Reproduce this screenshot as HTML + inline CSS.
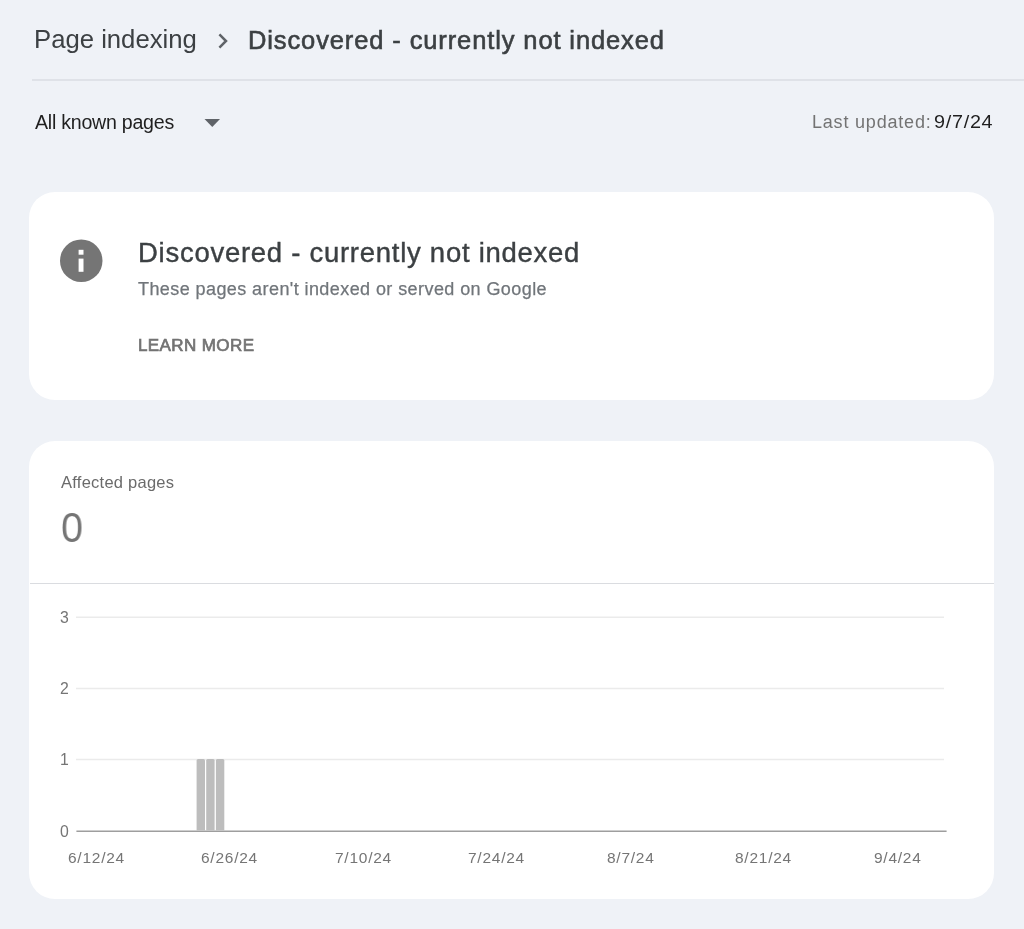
<!DOCTYPE html>
<html>
<head>
<meta charset="utf-8">
<style>
  html, body { margin:0; padding:0; }
  body { width:1024px; height:929px; overflow:hidden; background:#eff2f7; position:relative;
         font-family:"Liberation Sans", sans-serif; }
  .t { position:absolute; white-space:nowrap; line-height:1; will-change:transform; }
  .card { position:absolute; background:#fff; border-radius:26px; }
  .hr { position:absolute; height:1px; }
</style>
</head>
<body>
  <!-- header breadcrumb -->
  <div class="t" id="crumb1" style="left:34px;top:27px;font-size:25.7px;color:#3c4043;">Page indexing</div>
  <svg style="position:absolute;left:213.6px;top:29.6px" width="18" height="22" viewBox="0 0 18 22">
    <path d="M5.4 4.4 L12 11 L5.4 17.6" fill="none" stroke="#5f6368" stroke-width="2.5"/>
  </svg>
  <div class="t" id="crumb2" style="left:248px;top:28px;font-size:25.5px;letter-spacing:0.88px;-webkit-text-stroke:0.6px #3c4043;color:#3c4043;">Discovered - currently not indexed</div>
  <div class="hr" style="left:32px;top:79px;width:992px;height:2px;background:#dfe2e8;"></div>

  <!-- filter row -->
  <div class="t" id="allknown" style="left:35px;top:113px;font-size:19.6px;letter-spacing:-0.25px;color:#1f1f1f;">All known pages</div>
  <svg style="position:absolute;left:204px;top:118px" width="17" height="10" viewBox="0 0 17 10">
    <path d="M0.5 1 L16 1 L8.25 9 Z" fill="#5f6368"/>
  </svg>
  <div class="t" id="lastupd" style="left:812px;top:113px;font-size:18px;letter-spacing:0.8px;color:#737373;">Last updated:</div>
  <div class="t" id="lastdate" style="left:934px;top:113px;font-size:18px;letter-spacing:0.65px;transform:scaleX(1.1);transform-origin:0 0;color:#1f1f1f;">9/7/24</div>

  <!-- card 1 -->
  <div class="card" style="left:29px;top:192px;width:965px;height:208px;"></div>
  <svg style="position:absolute;left:59px;top:239px" width="44" height="44" viewBox="0 0 44 44">
    <circle cx="22.25" cy="21.75" r="21.25" fill="#757575"/>
    <rect x="19.6" y="10.8" width="4.9" height="4.9" fill="#fff"/>
    <rect x="19.6" y="19.6" width="4.9" height="13.2" fill="#fff"/>
  </svg>
  <div class="t" id="c1title" style="left:138px;top:239px;font-size:27.5px;letter-spacing:0.73px;-webkit-text-stroke:0.4px #3c4043;color:#3c4043;">Discovered - currently not indexed</div>
  <div class="t" id="c1sub" style="left:138px;top:280px;font-size:18px;letter-spacing:0.42px;-webkit-text-stroke:0.25px #70757a;color:#70757a;">These pages aren't indexed or served on Google</div>
  <div class="t" id="learn" style="left:138px;top:337px;font-size:17px;letter-spacing:0.4px;-webkit-text-stroke:0.7px #737373;color:#737373;">LEARN MORE</div>

  <!-- card 2 -->
  <div class="card" style="left:29px;top:441px;width:965px;height:458px;"></div>
  <div class="t" id="affected" style="left:61px;top:474px;font-size:16.5px;letter-spacing:0.25px;color:#6b6b6b;">Affected pages</div>
  <div class="t" id="zero" style="left:61px;top:507px;font-size:42.5px;transform:scaleX(0.93);transform-origin:0 0;color:#757575;">0</div>
  <div class="hr" style="left:30px;top:583px;width:964px;height:1px;background:#dadce0;"></div>

  <!-- chart -->
  <svg style="position:absolute;left:0;top:0" width="1024" height="929" viewBox="0 0 1024 929">
    <line x1="76" y1="617.3" x2="944" y2="617.3" stroke="#ebebeb" stroke-width="1.6"/>
    <line x1="76" y1="688.5" x2="944" y2="688.5" stroke="#ebebeb" stroke-width="1.6"/>
    <line x1="76" y1="759.5" x2="944" y2="759.5" stroke="#ebebeb" stroke-width="1.6"/>
    <line x1="76.4" y1="831.3" x2="946.6" y2="831.3" stroke="#9e9e9e" stroke-width="1.6"/>
    <path d="M196.6 830.5 V760.5 Q196.6 759 198.1 759 H203.5 Q205 759 205 760.5 V830.5 Z" fill="#bdbdbd"/>
    <path d="M206.2 830.5 V760.5 Q206.2 759 207.7 759 H213.1 Q214.6 759 214.6 760.5 V830.5 Z" fill="#bdbdbd"/>
    <path d="M215.9 830.5 V760.5 Q215.9 759 217.4 759 H222.8 Q224.3 759 224.3 760.5 V830.5 Z" fill="#bdbdbd"/>
  </svg>
  <div class="t ylab" style="left:59.7px;top:610px;font-size:15.8px;color:#757575;">3</div>
  <div class="t ylab" style="left:59.7px;top:681px;font-size:15.8px;color:#757575;">2</div>
  <div class="t ylab" style="left:59.7px;top:752px;font-size:15.8px;color:#757575;">1</div>
  <div class="t ylab" style="left:59.7px;top:824px;font-size:15.8px;color:#757575;">0</div>

  <div class="t xlab" style="left:68px;top:850px;font-size:15.5px;letter-spacing:0.75px;color:#757575;">6/12/24</div>
  <div class="t xlab" style="left:201px;top:850px;font-size:15.5px;letter-spacing:0.75px;color:#757575;">6/26/24</div>
  <div class="t xlab" style="left:335px;top:850px;font-size:15.5px;letter-spacing:0.75px;color:#757575;">7/10/24</div>
  <div class="t xlab" style="left:468px;top:850px;font-size:15.5px;letter-spacing:0.75px;color:#757575;">7/24/24</div>
  <div class="t xlab" style="left:607px;top:850px;font-size:15.5px;letter-spacing:0.75px;color:#757575;">8/7/24</div>
  <div class="t xlab" style="left:735px;top:850px;font-size:15.5px;letter-spacing:0.75px;color:#757575;">8/21/24</div>
  <div class="t xlab" style="left:874px;top:850px;font-size:15.5px;letter-spacing:0.75px;color:#757575;">9/4/24</div>
</body>
</html>
